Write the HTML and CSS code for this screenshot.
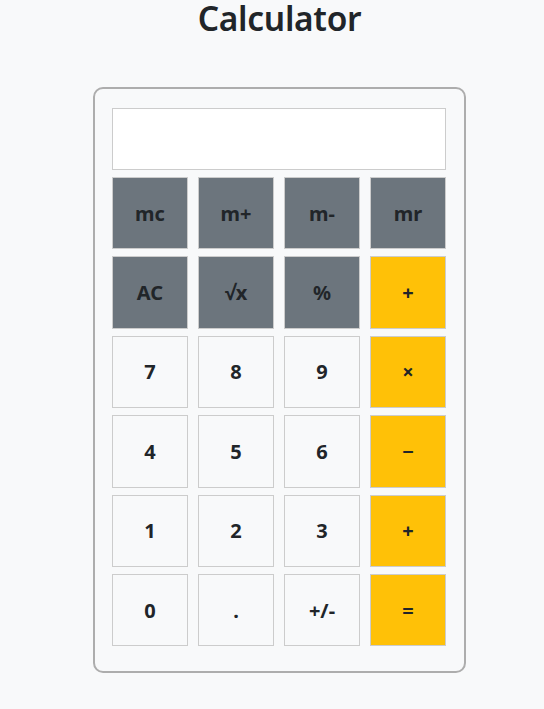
FILE: index.html
```html
<!DOCTYPE html>
<html lang="en">
<head>
<meta charset="utf-8">
<title>Calculator</title>
<link rel="stylesheet" href="styles.css">
</head>
<body>
<div class="page">
  <h1 class="title">Calculator</h1>
  <div class="calc">
    <div class="display"></div>
    <div class="keys">
      <button class="key key-gray">mc</button>
      <button class="key key-gray">m+</button>
      <button class="key key-gray">m-</button>
      <button class="key key-gray">mr</button>
      <button class="key key-gray">AC</button>
      <button class="key key-gray">√x</button>
      <button class="key key-gray">%</button>
      <button class="key key-op">+</button>
      <button class="key">7</button>
      <button class="key">8</button>
      <button class="key">9</button>
      <button class="key key-op">×</button>
      <button class="key">4</button>
      <button class="key">5</button>
      <button class="key">6</button>
      <button class="key key-op">−</button>
      <button class="key">1</button>
      <button class="key">2</button>
      <button class="key">3</button>
      <button class="key key-op">+</button>
      <button class="key">0</button>
      <button class="key">.</button>
      <button class="key">+/-</button>
      <button class="key key-op">=</button>
    </div>
  </div>
</div>
</body>
</html>
```

FILE: styles.css
```css
html, body {
  margin: 0;
  padding: 0;
  background: #f8f9fa;
  color: #212529;
  font-family: "Noto Sans", "Open Sans", "Liberation Sans", sans-serif;
}

.page {
  display: flex;
  flex-direction: column;
  align-items: center;
  padding-left: 15px;
}

.title {
  margin: 0;
  font-size: 33.5px;
  font-weight: 600;
  line-height: 32px;
  padding-top: 2px;
  letter-spacing: -0.3px;
}

.calc {
  margin-top: 53px;
  width: 334px;
  border: 2px solid #adadad;
  border-radius: 10px;
  padding: 19px 18px 25px 17px;
  background: #f8f9fa;
}

.display {
  height: 60px;
  background: #fff;
  border: 1px solid #cccccc;
  margin-bottom: 7px;
}

.keys {
  display: grid;
  grid-template-columns: repeat(4, 76px);
  grid-auto-rows: 72.4px;
  column-gap: 10px;
  row-gap: 7px;
}

.key {
  box-sizing: border-box;
  margin: 0;
  padding: 0;
  border: 1px solid #cccccc;
  border-radius: 0;
  background: #f8f9fa;
  color: #212529;
  font-family: inherit;
  font-size: 20px;
  font-weight: 700;
  display: flex;
  align-items: center;
  justify-content: center;
}

.key-gray {
  background: #6c757d;
}

.key-op {
  background: #ffc107;
}
```
